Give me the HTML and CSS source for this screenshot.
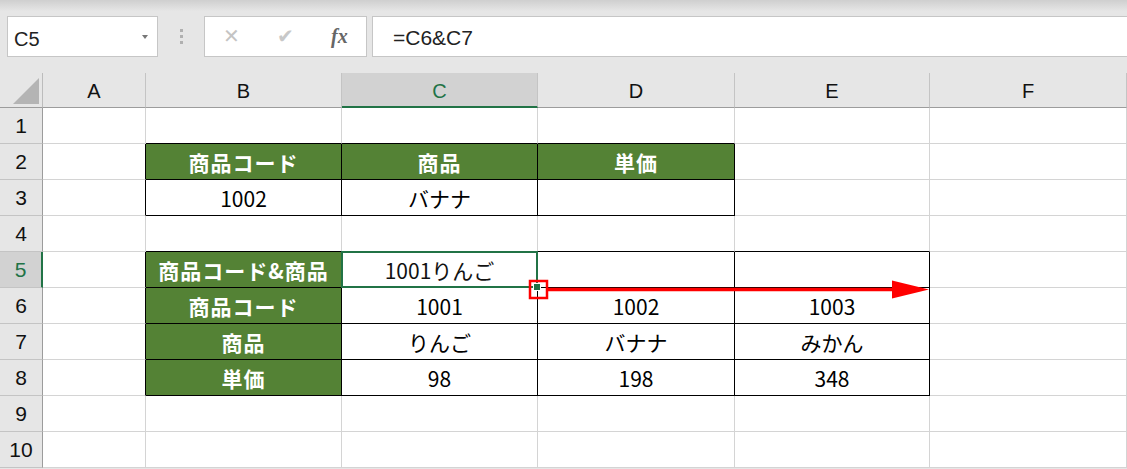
FILE: index.html
```html
<!DOCTYPE html>
<html lang="ja">
<head>
  <meta charset="UTF-8">
  <title>Excel - C5</title>
<link rel="stylesheet" href="styles.css">
</head>
<body>
<div class="topbar"></div>

<div class="fbar">
  <div class="namebox">C5<span class="caret"></span></div>
  <div class="grip"><i></i><i></i><i></i></div>
  <div class="fxbox">
    <span class="ico x">&#x2715;</span>
    <span class="ico ok">&#x2714;</span>
    <span class="ico fx">fx</span>
  </div>
  <div class="formula">=C6&amp;C7</div>
</div>

<div class="sheet">
  <!-- header row -->
  <div class="corner"><span></span></div>
  <div class="ch">A</div>
  <div class="ch">B</div>
  <div class="ch on">C</div>
  <div class="ch">D</div>
  <div class="ch">E</div>
  <div class="ch">F</div>

  <!-- 1 -->
  <div class="rh">1</div>
  <div class="c"></div>
  <div class="c bb"></div>
  <div class="c bb"></div>
  <div class="c bb"></div>
  <div class="c"></div>
  <div class="c"></div>

  <!-- 2 -->
  <div class="rh">2</div>
  <div class="c br"></div>
  <div class="c k hd">商品コード</div>
  <div class="c k hd">商品</div>
  <div class="c k hd">単価</div>
  <div class="c"></div>
  <div class="c"></div>

  <!-- 3 -->
  <div class="rh">3</div>
  <div class="c br"></div>
  <div class="c k">1002</div>
  <div class="c k">バナナ</div>
  <div class="c k"></div>
  <div class="c"></div>
  <div class="c"></div>

  <!-- 4 -->
  <div class="rh">4</div>
  <div class="c"></div>
  <div class="c bb"></div>
  <div class="c bb"></div>
  <div class="c bb"></div>
  <div class="c bb"></div>
  <div class="c"></div>

  <!-- 5 -->
  <div class="rh on">5</div>
  <div class="c br"></div>
  <div class="c k hd">商品コード&amp;商品</div>
  <div class="c k sel">1001りんご</div>
  <div class="c k"></div>
  <div class="c k"></div>
  <div class="c"></div>

  <!-- 6 -->
  <div class="rh">6</div>
  <div class="c br"></div>
  <div class="c k hd">商品コード</div>
  <div class="c k">1001</div>
  <div class="c k">1002</div>
  <div class="c k">1003</div>
  <div class="c"></div>

  <!-- 7 -->
  <div class="rh">7</div>
  <div class="c br"></div>
  <div class="c k hd">商品</div>
  <div class="c k">りんご</div>
  <div class="c k">バナナ</div>
  <div class="c k">みかん</div>
  <div class="c"></div>

  <!-- 8 -->
  <div class="rh">8</div>
  <div class="c br"></div>
  <div class="c k hd">単価</div>
  <div class="c k">98</div>
  <div class="c k">198</div>
  <div class="c k">348</div>
  <div class="c"></div>

  <!-- 9 -->
  <div class="rh">9</div>
  <div class="c"></div>
  <div class="c"></div>
  <div class="c"></div>
  <div class="c"></div>
  <div class="c"></div>
  <div class="c"></div>

  <!-- 10 -->
  <div class="rh">10</div>
  <div class="c"></div>
  <div class="c"></div>
  <div class="c"></div>
  <div class="c"></div>
  <div class="c"></div>
  <div class="c"></div>

  <!-- fill handle drag arrow -->
  <svg class="drag" width="420" height="24" viewBox="0 0 420 24">
    <rect x="2" y="3" width="17" height="17" fill="none" stroke="#ff0000" stroke-width="2.5"/>
    <line x1="19" y1="11.5" x2="368" y2="11.5" stroke="#ff0000" stroke-width="3.5"/>
    <polygon points="364,2.5 401,11.5 364,20.5" fill="#ff0000"/>
  </svg>
</div>
</body>
</html>
```

FILE: styles.css
```css
body {
  margin: 0;
  background: #e6e6e6;
  font-family: "Noto Sans CJK JP", "Noto Sans", sans-serif;
  color: #000;
  width: 1127px;
  height: 469px;
  overflow: hidden;
}

.topbar {
  height: 16px;
  background: linear-gradient(#cfcfcf, #e6e6e6 70%);
}

/* formula bar */
.fbar {
  display: flex;
  height: 41px;
  align-items: stretch;
}
.namebox {
  margin-left: 7px;
  width: 151px;
  box-sizing: border-box;
  background: #fff;
  border: 1px solid #c6c6c6;
  position: relative;
  font-family: "Liberation Sans", sans-serif;
  font-size: 20px;
  line-height: 44px;
  padding-left: 6px;
  color: #222;
}
.caret {
  position: absolute;
  right: 9px;
  top: 18px;
  border-left: 3px solid transparent;
  border-right: 3px solid transparent;
  border-top: 4px solid #777;
}
.grip {
  width: 46px;
  display: flex;
  flex-direction: column;
  align-items: center;
  justify-content: center;
  gap: 3px;
}
.grip i {
  width: 3px;
  height: 3px;
  background: #b0b0b0;
}
.fxbox {
  width: 163px;
  box-sizing: border-box;
  background: #fff;
  border: 1px solid #c6c6c6;
  display: flex;
  align-items: center;
  position: relative;
}
.ico {
  position: absolute;
  color: #c4c4c4;
  font-size: 20px;
  top: 7px;
}
.ico.x { left: 18px; font-family: "DejaVu Sans", sans-serif; }
.ico.ok { left: 72px; font-family: "DejaVu Sans", sans-serif; color: #c8c8c8; }
.ico.fx {
  left: 126px;
  font-family: "Liberation Serif", serif;
  font-style: italic;
  font-weight: bold;
  color: #666;
  font-size: 20px;
  top: 8px;
}
.formula {
  margin-left: 5px;
  flex: 1;
  background: #fff;
  border: 1px solid #c6c6c6;
  border-right: none;
  font-family: "Liberation Sans", sans-serif;
  font-size: 21px;
  line-height: 42px;
  padding-left: 20px;
  color: #222;
}

/* grid */
.sheet {
  margin-top: 16px;
  display: grid;
  grid-template-columns: 43px 103px 196px 196px 197px 195px 197px;
  grid-template-rows: 35px repeat(10, 36px);
  background: #fff;
  position: relative;
}
.corner {
  background: #e6e6e6;
  border-right: 1px solid #bcbcbc;
  border-bottom: 1px solid #9c9c9c;
  position: relative;
}
.corner span {
  position: absolute;
  right: 3px;
  bottom: 3px;
  width: 0;
  height: 0;
  border-left: 26px solid transparent;
  border-bottom: 26px solid #b4b4b4;
}
.ch {
  background: #e6e6e6;
  border-bottom: 1px solid #9c9c9c;
  border-right: 1px solid #c4c4c4;
  text-align: center;
  font-family: "Liberation Sans", sans-serif;
  font-size: 20px;
  line-height: 36px;
  color: #111;
}
.ch.on {
  background: #d2d2d2;
  border-bottom: 2px solid #217346;
  color: #217346;
}
.rh {
  background: #e6e6e6;
  border-right: 1px solid #9c9c9c;
  border-bottom: 1px solid #c4c4c4;
  text-align: center;
  font-family: "Liberation Sans", sans-serif;
  font-size: 21px;
  line-height: 36px;
  color: #111;
  box-sizing: border-box;
}
.rh.on {
  background: #d2d2d2;
  border-right: 2px solid #217346;
  color: #217346;
}
.c {
  border-right: 1px solid #d4d4d4;
  border-bottom: 1px solid #d4d4d4;
  text-align: center;
  font-size: 21px;
  line-height: 36px;
  white-space: nowrap;
}
.c.bb { border-bottom-color: #000; }
.c.br { border-right-color: #000; }
.c.k {
  border-right-color: #000;
  border-bottom-color: #000;
}
.c.hd {
  background: #548235;
  color: #fff;
  font-weight: bold;
  letter-spacing: 1px;
}
.c.sel {
  position: relative;
  color: #111;
}
.c.sel::after {
  content: "";
  position: absolute;
  left: -1px;
  top: -1px;
  right: -1px;
  bottom: -1px;
  border: 2px solid #217346;
}
.c.sel::before {
  content: "";
  position: absolute;
  right: -4px;
  bottom: -4px;
  width: 6px;
  height: 6px;
  background: #217346;
  border: 1px solid #fff;
  z-index: 2;
}

.drag {
  position: absolute;
  left: 528px;
  top: 205px;
  z-index: 3;
}
```
